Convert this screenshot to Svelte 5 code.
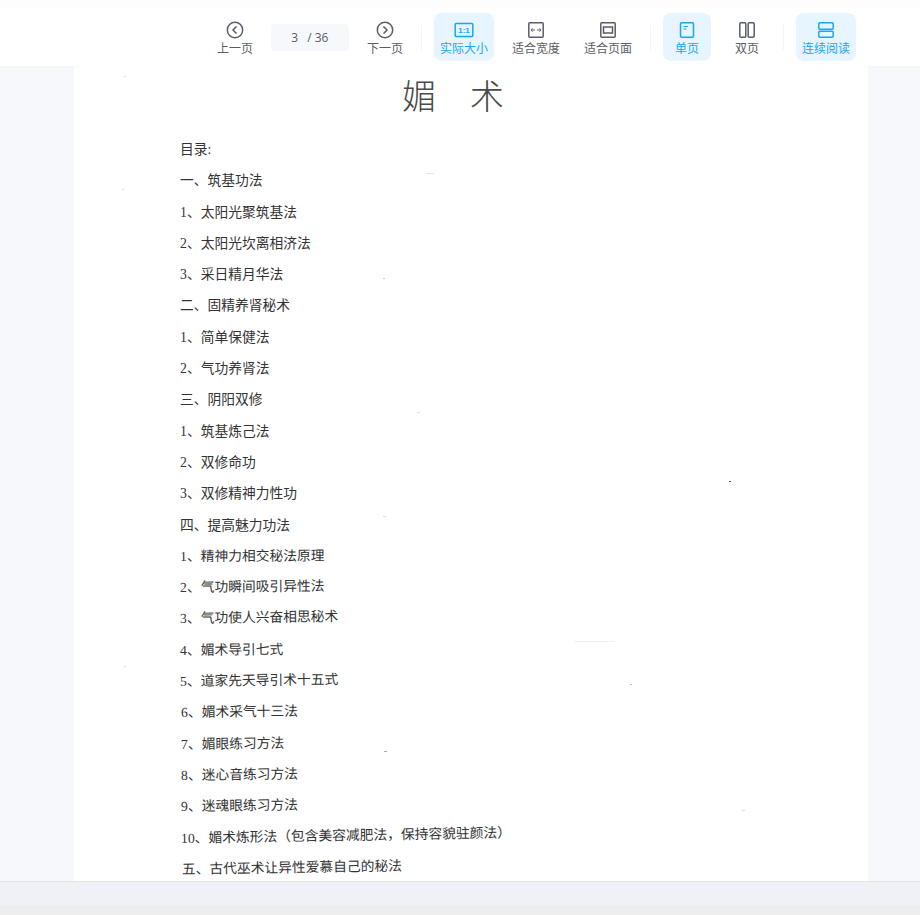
<script lang="ts">
    // tilt = how far the scanned line leans, it gets worse towards the page bottom
    const rows = [
        { text: "目录:", tilt: 0, shift: 0 },
        { text: "一、筑基功法", tilt: 0, shift: 0 },
        { text: "1、太阳光聚筑基法", tilt: 0, shift: 0 },
        { text: "2、太阳光坎离相济法", tilt: 0, shift: 0 },
        { text: "3、采日精月华法", tilt: 0, shift: 0 },
        { text: "二、固精养肾秘术", tilt: 0, shift: 0 },
        { text: "1、简单保健法", tilt: 0, shift: 0 },
        { text: "2、气功养肾法", tilt: 0, shift: 0 },
        { text: "三、阴阳双修", tilt: 0, shift: 0 },
        { text: "1、筑基炼己法", tilt: 0, shift: 0 },
        { text: "2、双修命功", tilt: 0, shift: 0 },
        { text: "3、双修精神力性功", tilt: 0, shift: 0 },
        { text: "四、提高魅力功法", tilt: 0, shift: 0 },
        { text: "1、精神力相交秘法原理", tilt: -0.2, shift: 0 },
        { text: "2、气功瞬间吸引异性法", tilt: -0.5, shift: 0 },
        { text: "3、气功使人兴奋相思秘术", tilt: -0.7, shift: 0 },
        { text: "4、媚术导引七式", tilt: -0.5, shift: 0 },
        { text: "5、道家先天导引术十五式", tilt: -0.7, shift: 0 },
        { text: "6、媚术采气十三法", tilt: -0.6, shift: 1 },
        { text: "7、媚眼练习方法", tilt: -0.6, shift: 1 },
        { text: "8、迷心音练习方法", tilt: -0.7, shift: 1 },
        { text: "9、迷魂眼练习方法", tilt: -0.7, shift: 1 },
        { text: "10、媚术炼形法（包含美容减肥法，保持容貌驻颜法）", tilt: -1, shift: 1 },
        { text: "五、古代巫术让异性爱慕自己的秘法", tilt: -0.9, shift: 2 }
    ];

    // scanner dust on the page, x/y relative to the paper, last value = colour
    const specks = [
        [50, 10, 2, "#dddddd"], [48, 123, 2, "#dddddd"], [352, 107, 8, "#e4e4e4"],
        [309, 212, 2, "#cfcfcf"], [343, 346, 3, "#dddddd"], [655, 415, 2, "#555555"],
        [309, 450, 3, "#dddddd"], [50, 600, 2, "#dddddd"], [500, 575, 40, "#efefef"],
        [556, 618, 2, "#bbbbbb"], [310, 685, 3, "#aaaaaa"], [668, 744, 3, "#dddddd"]
    ];
</script>

<style>
    :global(body) {
        font-family: "Noto Sans CJK SC", sans-serif;
        background: #eeeeee;
    }

    .app {
        height: 915px;
        display: flex;
        flex-direction: column;
        overflow: hidden;
    }

    .toolbar {
        position: relative;
        z-index: 1;
        height: 58px;
        flex-shrink: 0;
        border-top: 8px solid #fdfdfd;
        background: white;
        display: flex;
        justify-content: flex-end;
        align-items: center;
        gap: 12px;
        padding-right: 64px;
        box-shadow: 0 1px 3px rgba(0,0,0,0.02);
    }

    .tool {
        height: 48px;
        box-sizing: border-box;
        padding: 2px 6px 0;
        border-radius: 8px;
        display: flex;
        flex-direction: column;
        align-items: center;
        justify-content: center;
        font-size: 12px;
        line-height: 16px;
        color: #5a5d66;
    }

    .tool svg {
        display: block;
        width: 20px;
        height: 20px;
        fill: none;
        stroke: currentColor;
        stroke-width: 1.5;
    }

    .tool.wide {
        padding-left: 12px;
        padding-right: 12px;
    }

    .tool.active {
        background: #e6f5ff;
        color: #1ba5f2;
    }

    .ratio {
        font-family: "Liberation Sans", sans-serif;
        font-size: 8px;
        font-weight: bold;
        fill: currentColor;
        stroke: none;
    }

    .page_box {
        width: 78px;
        height: 27px;
        border-radius: 4px;
        background: #f7f8fc;
        display: flex;
        justify-content: center;
        align-items: center;
        gap: 9px;
        font-family: "Open Sans", sans-serif;
        font-size: 12px;
        color: #5a5d66;
    }

    .divider {
        width: 1px;
        height: 25px;
        background: #f2f3f5;
    }

    .viewer {
        flex: 1;
        min-height: 0;
        background: #f7f8fb;
        overflow: hidden;
    }

    .paper {
        position: relative;
        width: 794px;
        height: 100%;
        margin-left: 74px;
        background: white;
        font-family: "Liberation Serif", "Noto Sans CJK SC", serif;
        color: #333333;
        overflow: hidden;
    }

    .paper h1 {
        margin: 0;
        padding: 9px 0 0 328px;
        font-size: 34px;
        line-height: 46px;
        font-weight: 300;
        color: #4a4a4a;
    }

    .toc {
        margin-top: 13px;
        padding-left: 106px;
    }

    .toc div {
        height: 31.3px;
        line-height: 31.3px;
        font-size: 13.75px;
        white-space: nowrap;
        transform-origin: left center;
    }

    .speck {
        position: absolute;
        height: 1px;
    }

    .footer {
        height: 23px;
        flex-shrink: 0;
        background: #f0f1f7;
        border-top: 1px solid #e2e3e6;
    }

    .bottom {
        height: 10px;
        flex-shrink: 0;
        background: #eeeeee;
    }
</style>

<div class="app">
    <div class="toolbar">
        <div class="tool">
            <svg viewBox="0 0 20 20"><circle cx="10" cy="10" r="7.7"/><polyline points="11.5 6.5 8 10 11.5 13.5"/></svg>
            <span>上一页</span>
        </div>
        <div class="page_box"><span>3</span><span>/ 36</span></div>
        <div class="tool">
            <svg viewBox="0 0 20 20"><circle cx="10" cy="10" r="7.7"/><polyline points="8.5 6.5 12 10 8.5 13.5"/></svg>
            <span>下一页</span>
        </div>
        <div class="divider"></div>
        <div class="tool active">
            <svg viewBox="0 0 20 20"><rect x="1.2" y="3.5" width="17.6" height="13" rx="1"/><text class="ratio" x="10" y="12.9" text-anchor="middle">1:1</text></svg>
            <span>实际大小</span>
        </div>
        <div class="tool">
            <svg viewBox="0 0 20 20"><rect x="2.8" y="2.8" width="14.4" height="14.4" rx="1"/><path d="M5 10H9M6.5 8.3 5 10l1.5 1.7M15 10H11M13.5 8.3 15 10l-1.5 1.7" stroke-width="1"/></svg>
            <span>适合宽度</span>
        </div>
        <div class="tool">
            <svg viewBox="0 0 20 20"><rect x="2.8" y="2.8" width="14.4" height="14.4" rx="1"/><rect x="5.5" y="7" width="9" height="6"/></svg>
            <span>适合页面</span>
        </div>
        <div class="divider"></div>
        <div class="tool wide active">
            <svg viewBox="0 0 20 20"><rect x="3.5" y="2.8" width="13" height="14.4" rx="1"/><path d="M6.5 6.5H11M6.5 9H9.5" stroke-width="1.2"/></svg>
            <span>单页</span>
        </div>
        <div class="tool wide">
            <svg viewBox="0 0 20 20"><rect x="2.8" y="2.8" width="6" height="14.4" rx="1"/><rect x="11.2" y="2.8" width="6" height="14.4" rx="1"/></svg>
            <span>双页</span>
        </div>
        <div class="divider"></div>
        <div class="tool active">
            <svg viewBox="0 0 20 20"><rect x="2.8" y="2.8" width="14.4" height="6.4" rx="1"/><rect x="2.8" y="11.2" width="14.4" height="6" rx="1"/></svg>
            <span>连续阅读</span>
        </div>
    </div>

    <div class="viewer">
        <div class="paper">
            <h1>媚　术</h1>
            <div class="toc">
                {#each rows as row}
                    <div style="transform: translateX({row.shift}px) rotate({row.tilt}deg)">{row.text}</div>
                {/each}
            </div>
            {#each specks as [x, y, w, colour]}
                <span class="speck" style="left: {x}px; top: {y}px; width: {w}px; background: {colour}"></span>
            {/each}
        </div>
    </div>

    <div class="footer"></div>
    <div class="bottom"></div>
</div>
